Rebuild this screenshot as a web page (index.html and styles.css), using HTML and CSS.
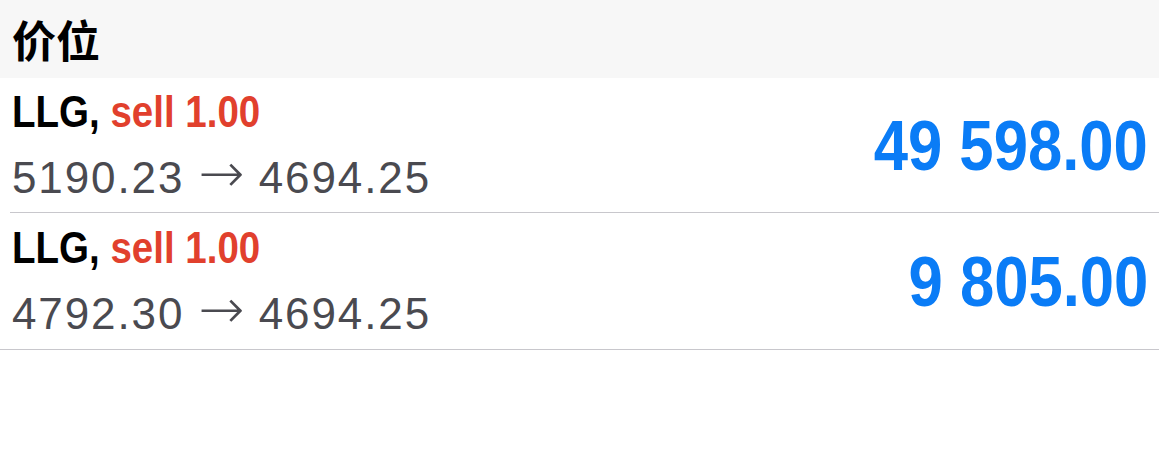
FILE: index.html
```html
<!DOCTYPE html>
<html lang="zh">
<head>
<meta charset="utf-8">
<title>价位</title>
<link rel="stylesheet" href="styles.css">
</head>
<body>
<div class="header">价位</div>
<div class="list">
  <div class="row inset">
    <div class="info">
      <div class="title"><span class="cond"><span class="sym">LLG,</span> <span class="side">sell 1.00</span></span></div>
      <div class="prices">5190.23 <span class="arrow">→</span> 4694.25</div>
    </div>
    <div class="profit"><span class="big">49 598.00</span></div>
  </div>
  <div class="row">
    <div class="info">
      <div class="title"><span class="cond"><span class="sym">LLG,</span> <span class="side">sell 1.00</span></span></div>
      <div class="prices">4792.30 <span class="arrow">→</span> 4694.25</div>
    </div>
    <div class="profit"><span class="big">9 805.00</span></div>
  </div>
</div>
</body>
</html>
```
FILE: styles.css
```css
html, body {
  margin: 0;
  padding: 0;
  background: #ffffff;
}
body {
  font-family: "Liberation Sans", Arial, "Noto Sans CJK SC", sans-serif;
  width: 1159px;
  height: 455px;
  overflow: hidden;
}
.header {
  height: 78px;
  background: #f7f7f7;
  display: flex;
  align-items: center;
  padding-left: 12px;
  font-family: "Noto Sans CJK SC", sans-serif;
  font-weight: 700;
  font-size: 44px;
  color: #000;
}
.row {
  display: flex;
  justify-content: space-between;
  align-items: center;
  height: 136px;
  border-bottom: 1px solid #c8c7cc;
  padding: 0 11px 0 12px;
}
.row.inset {
  margin-left: 10px;
  padding-left: 2px;
  height: 134px;
}
.info {
  display: flex;
  flex-direction: column;
}
.title {
  height: 66px;
  line-height: 66px;
  font-size: 44px;
  font-weight: 700;
  white-space: nowrap;
}
.cond {
  display: inline-block;
  transform: scaleX(0.875);
  transform-origin: left center;
}
.sym {
  color: #000;
}
.side {
  color: #e1402d;
}
.prices {
  height: 66px;
  line-height: 66px;
  font-size: 44px;
  letter-spacing: 1.9px;
  color: #4a4a50;
  white-space: nowrap;
}
.arrow {
  font-family: "DejaVu Sans", sans-serif;
  font-weight: 200;
  font-size: 55px;
  letter-spacing: 0;
  line-height: 0;
  vertical-align: 1px;
}
.profit {
  font-size: 71px;
  font-weight: 700;
  color: #0a7cf6;
  white-space: nowrap;
}
.big {
  display: inline-block;
  transform: scaleX(0.868);
  transform-origin: right center;
}
```
